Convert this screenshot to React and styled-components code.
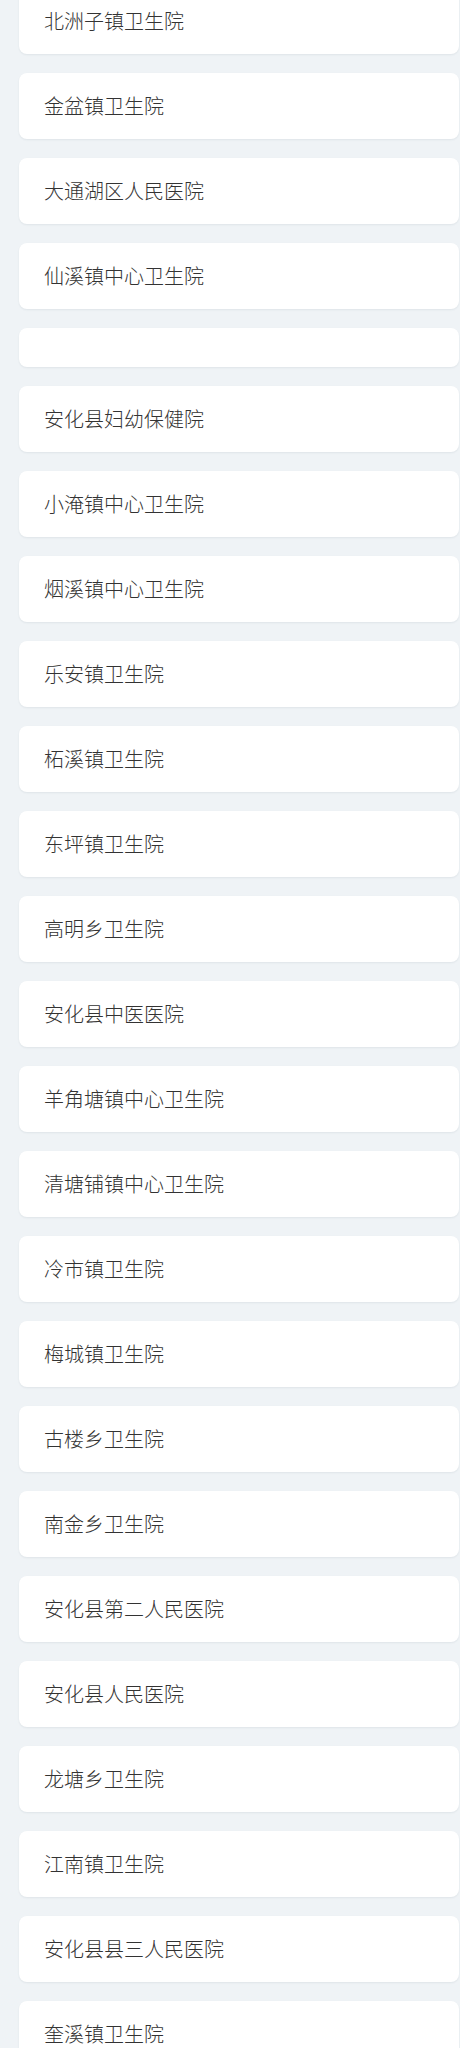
import React from "react";
import styled, { createGlobalStyle } from "styled-components";

const hospitals = [
  "北洲子镇卫生院",
  "金盆镇卫生院",
  "大通湖区人民医院",
  "仙溪镇中心卫生院",
  "",
  "安化县妇幼保健院",
  "小淹镇中心卫生院",
  "烟溪镇中心卫生院",
  "乐安镇卫生院",
  "柘溪镇卫生院",
  "东坪镇卫生院",
  "高明乡卫生院",
  "安化县中医医院",
  "羊角塘镇中心卫生院",
  "清塘铺镇中心卫生院",
  "冷市镇卫生院",
  "梅城镇卫生院",
  "古楼乡卫生院",
  "南金乡卫生院",
  "安化县第二人民医院",
  "安化县人民医院",
  "龙塘乡卫生院",
  "江南镇卫生院",
  "安化县县三人民医院",
  "奎溪镇卫生院",
];

const GlobalStyle = createGlobalStyle`
    html, body {
        margin: 0;
        padding: 0;
        background: #eff3f6;
        font-family: "Noto Sans CJK SC", "Noto Sans", sans-serif;
        overflow: hidden;
    }
`;

const App = () => {
  return (
    <>
      <GlobalStyle />
      <List>
        {hospitals.map((name, i) => (
          <Card key={i}>{name}</Card>
        ))}
      </List>
    </>
  );
};

const List = styled.div`
    display: flex;
    flex-direction: column;
    gap: 19px;
    margin-top: -12.3px;
    padding: 0 1px 0 19px;
`;

const Card = styled.div`
    background: #ffffff;
    border-radius: 8px;
    box-shadow: 0 1px 2px rgba(40, 60, 80, 0.08);
    padding: 19.5px 25px;
    font-size: 20px;
    font-weight: 300;
    line-height: 27px;
    color: #333333;
`;

export default App;
